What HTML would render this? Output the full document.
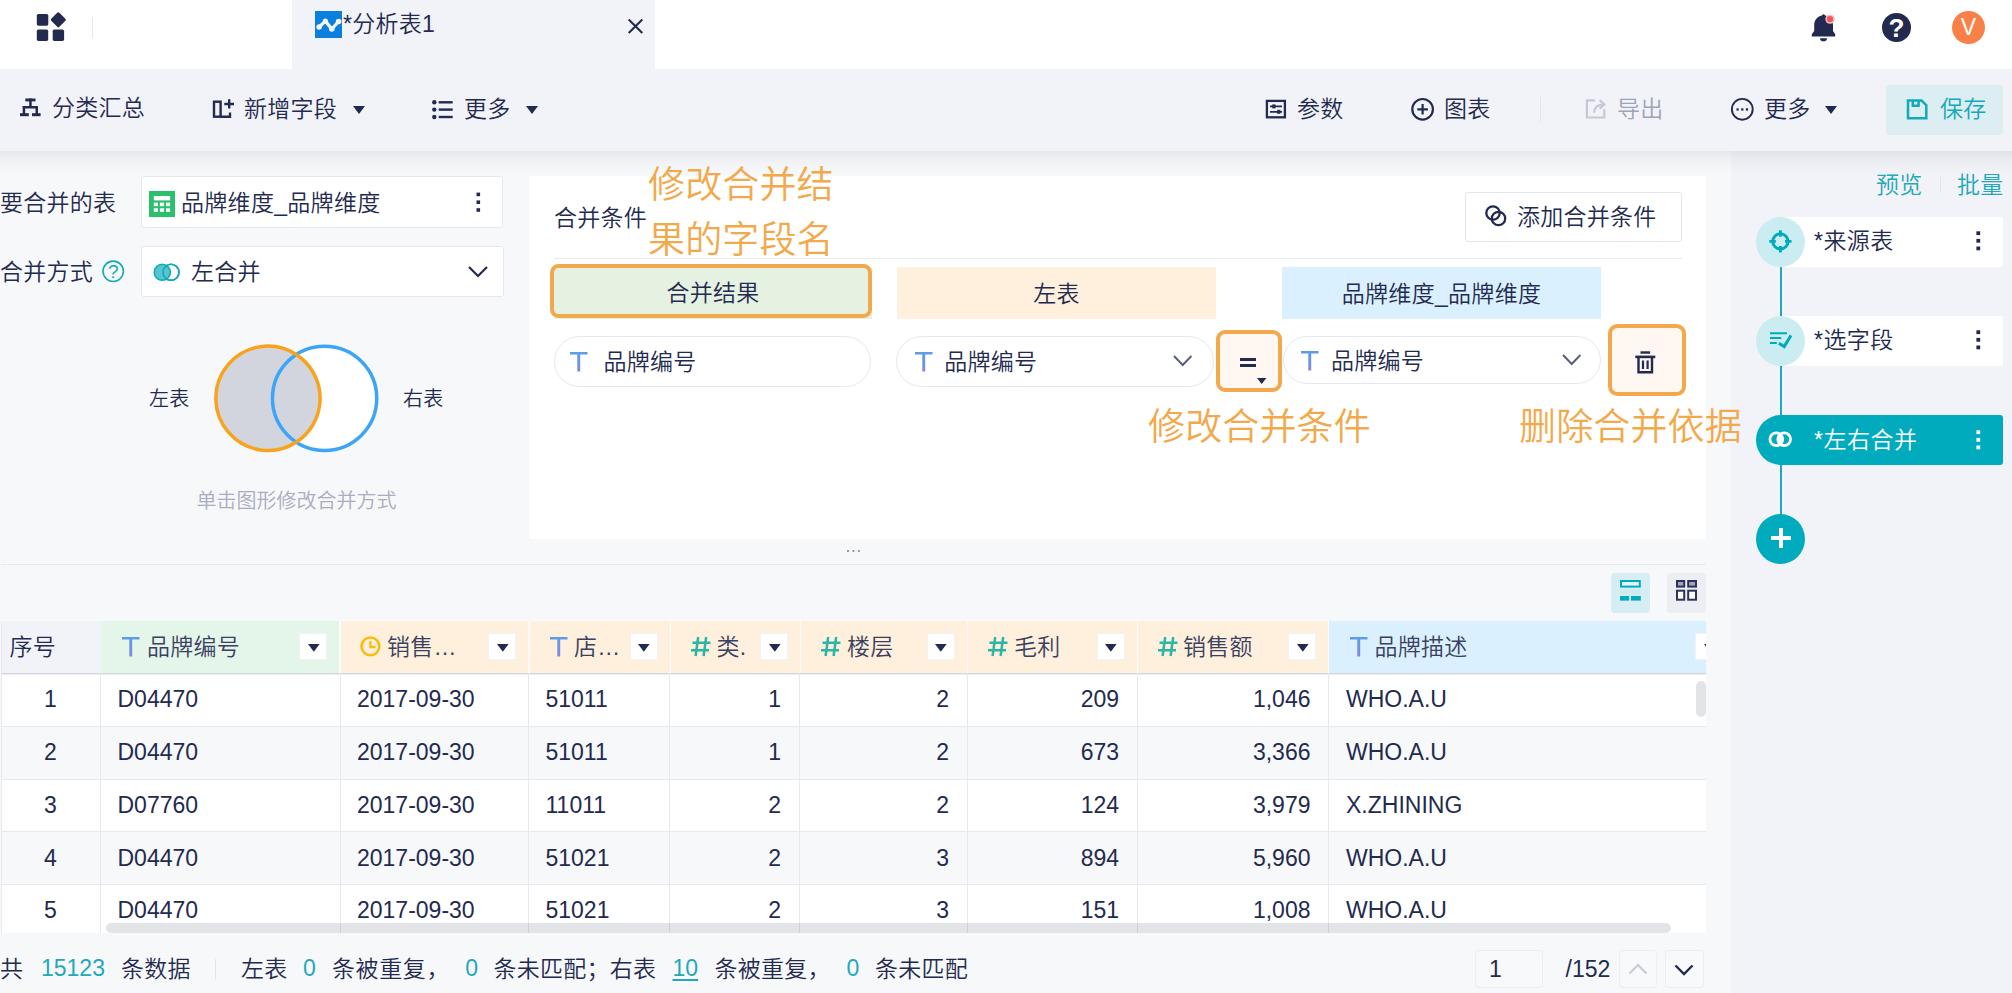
<!DOCTYPE html>
<html lang="zh-CN"><head><meta charset="utf-8"><title>分析表1</title>
<style>
html,body{margin:0;padding:0;}
body{width:2012px;height:993px;overflow:hidden;position:relative;background:#f7f8fa;font-family:"Liberation Sans","Noto Sans CJK SC",sans-serif;font-weight:350;color:#232a50;}
.t{position:absolute;white-space:nowrap;font-weight:350;}
.r{position:absolute;white-space:nowrap;font-weight:350;text-align:right;}
</style></head><body>

<div style="position:absolute;left:0px;top:0px;width:2012px;height:69px;background:#fff;"></div>
<div style="position:absolute;left:292px;top:0px;width:363px;height:69px;background:#f2f3f8;"></div>
<div style="position:absolute;left:1731px;top:151px;width:281px;height:842px;background:#f2f3f8;"></div>
<div style="position:absolute;left:0px;top:69px;width:2012px;height:82px;background:#f2f3f8;"></div>
<div style="position:absolute;left:0px;top:151px;width:2012px;height:24px;background:linear-gradient(to bottom,rgba(35,42,80,0.085),rgba(35,42,80,0.05) 22%,rgba(35,42,80,0.022) 50%,rgba(35,42,80,0.006) 80%,rgba(35,42,80,0));"></div>
<svg style="position:absolute;left:36px;top:12px;overflow:visible;" width="30" height="30" viewBox="0 0 30 30"><g fill="#232a50"><rect x="0.8" y="1.9" width="11.5" height="11.8" rx="1.6"/><rect x="0.8" y="17.6" width="11.4" height="11.3" rx="1.6"/><rect x="16.7" y="17.6" width="11.4" height="11.3" rx="1.6"/><rect x="16.55" y="2.05" width="11.5" height="11.5" rx="1.5" transform="rotate(45 22.3 7.8)"/></g></svg>
<div style="position:absolute;left:92px;top:17px;width:1px;height:21px;background:#e6e8ee;"></div>
<svg style="position:absolute;left:315px;top:11px;overflow:visible;" width="27" height="27" viewBox="0 0 27 27"><rect width="27" height="27" fill="#0a7fdd"/><polyline points="4.1,16 10.4,10.1 16.8,18 23.6,10.5" fill="none" stroke="#f3f7fc" stroke-width="3.3" stroke-linejoin="round" stroke-linecap="round"/><g fill="#f3f7fc"><circle cx="4.1" cy="16" r="2.8"/><circle cx="10.4" cy="10.1" r="2.6"/><circle cx="16.8" cy="18" r="2.8"/><circle cx="23.6" cy="10.5" r="2.8"/></g></svg>
<div class="t" style="left:343px;top:9px;font-size:23px;line-height:30px;color:#232a50;letter-spacing:0.25px;">*分析表1</div>
<svg style="position:absolute;left:628px;top:19px;overflow:visible;" width="15" height="15" viewBox="0 0 15 15"><path d="M0.7 0.6 L14.3 13.9 M14.3 0.6 L0.7 13.9" stroke="#232a50" stroke-width="2.1" fill="none"/></svg>
<svg style="position:absolute;left:1811px;top:13px;overflow:visible;" width="25" height="29" viewBox="0 0 25 29"><path d="M10.9 2.4 Q12.5 0 14.1 2.4 C19 3.4 22 7.2 22 12 V18 L24.2 21.3 V23.5 H0.8 V21.3 L3.2 18 V12 C3.2 7.2 6 3.4 10.9 2.4 Z" fill="#232a50"/><path d="M9 25.2 H16 A3.5 3.1 0 0 1 9 25.2Z" fill="#232a50"/><circle cx="19" cy="6.1" r="4.7" fill="#f6bcc0"/><circle cx="19" cy="6.1" r="3.2" fill="#ec5860"/></svg>
<div style="position:absolute;left:1881.5px;top:13px;width:29px;height:29px;background:#232a50;border-radius:50%;"></div>
<div class="t" style="left:1882px;top:13px;width:29px;text-align:center;font-size:26px;line-height:30px;color:#fff;font-weight:700;">?</div>
<div style="position:absolute;left:1952px;top:11px;width:33px;height:33px;background:#f98148;border-radius:50%;"></div>
<div class="t" style="left:1952px;top:11px;width:33px;text-align:center;font-size:23px;line-height:33px;color:#fff;font-weight:400;">V</div>
<svg style="position:absolute;left:20px;top:98px;overflow:visible;" width="21" height="19" viewBox="0 0 21 19"><g fill="#232a50"><rect x="5.3" y="0.5" width="10.2" height="2.9"/><rect x="9.2" y="0.5" width="2.5" height="9"/><rect x="2.7" y="8" width="15.3" height="2.5"/><rect x="2.7" y="8" width="2.5" height="8"/><rect x="15.5" y="8" width="2.5" height="8"/><rect x="0" y="15.2" width="8.8" height="3"/><rect x="12" y="15.2" width="8.6" height="3"/></g></svg>
<div class="t" style="left:52px;top:93px;font-size:23px;line-height:30px;color:#232a50;letter-spacing:0.25px;">分类汇总</div>
<svg style="position:absolute;left:212px;top:99px;overflow:visible;" width="23" height="20" viewBox="0 0 23 20"><g fill="none" stroke="#232a50" stroke-width="2.4"><rect x="2" y="2.7" width="6.6" height="15"/><path d="M8.6 17.7 H18 V13.6"/><path d="M12.3 5 H22 M17.2 0.3 V9.5"/></g></svg>
<div class="t" style="left:244px;top:94px;font-size:23px;line-height:30px;color:#232a50;letter-spacing:0.25px;">新增字段</div>
<svg style="position:absolute;left:353px;top:106px;overflow:visible;" width="12" height="8" viewBox="0 0 12 8"><path d="M0 0 H12 L6 8 Z" fill="#232a50"/></svg>
<svg style="position:absolute;left:432px;top:100px;overflow:visible;" width="21" height="19" viewBox="0 0 21 19"><g fill="#232a50"><circle cx="2.3" cy="2.3" r="2.2"/><circle cx="2.3" cy="9.6" r="2.2"/><circle cx="2.3" cy="17" r="2.2"/><rect x="6.7" y="1.1" width="14" height="2.4"/><rect x="6.7" y="8.4" width="14" height="2.4"/><rect x="6.7" y="15.8" width="14" height="2.4"/></g></svg>
<div class="t" style="left:464px;top:94px;font-size:23px;line-height:30px;color:#232a50;letter-spacing:0.25px;">更多</div>
<svg style="position:absolute;left:526px;top:106px;overflow:visible;" width="12" height="8" viewBox="0 0 12 8"><path d="M0 0 H12 L6 8 Z" fill="#232a50"/></svg>
<svg style="position:absolute;left:1265px;top:99px;overflow:visible;" width="22" height="20" viewBox="0 0 22 20"><g fill="none" stroke="#232a50" stroke-width="2.3"><rect x="1.9" y="1.9" width="18" height="16.4"/><path d="M5 7.4 H17 M5 12.8 H17" stroke-width="1.7"/></g><rect x="7.3" y="5.4" width="3.2" height="4" fill="#232a50"/><rect x="12.2" y="10.8" width="3.2" height="4" fill="#232a50"/></svg>
<div class="t" style="left:1297px;top:94px;font-size:23px;line-height:30px;color:#232a50;letter-spacing:0.25px;">参数</div>
<svg style="position:absolute;left:1411px;top:98px;overflow:visible;" width="23" height="23" viewBox="0 0 23 23"><g fill="none" stroke="#232a50" stroke-width="2.2"><circle cx="11.6" cy="11.3" r="10.3"/><path d="M6.3 11.3 H16.9 M11.6 6 V16.6"/></g></svg>
<div class="t" style="left:1444px;top:94px;font-size:23px;line-height:30px;color:#232a50;letter-spacing:0.25px;">图表</div>
<div style="position:absolute;left:1540px;top:97px;width:1px;height:26px;background:#e4e6ec;"></div>
<svg style="position:absolute;left:1585px;top:98px;overflow:visible;" width="22" height="22" viewBox="0 0 22 22"><g fill="none" stroke="#c6c9d5" stroke-width="2.2"><path d="M9.9 2.3 H1.9 V19.5 H19.3 V11.2"/><path d="M9.2 14.8 C9.2 9.2 12.2 6.4 19 6.3"/><path d="M14.6 2 L19.4 6.4 L14.6 10.8" stroke-linejoin="miter"/></g></svg>
<div class="t" style="left:1617px;top:94px;font-size:23px;line-height:30px;color:#9fa3b8;letter-spacing:0.25px;">导出</div>
<svg style="position:absolute;left:1730px;top:98px;overflow:visible;" width="24" height="23" viewBox="0 0 24 23"><circle cx="12.3" cy="11.3" r="10.4" fill="none" stroke="#232a50" stroke-width="1.9"/><g fill="#232a50"><rect x="6.5" y="10.3" width="2.2" height="2.3"/><rect x="11.2" y="10.3" width="2.2" height="2.3"/><rect x="15.9" y="10.3" width="2.2" height="2.3"/></g></svg>
<div class="t" style="left:1764px;top:94px;font-size:23px;line-height:30px;color:#232a50;letter-spacing:0.25px;">更多</div>
<svg style="position:absolute;left:1825px;top:106px;overflow:visible;" width="12" height="8" viewBox="0 0 12 8"><path d="M0 0 H12 L6 8 Z" fill="#232a50"/></svg>
<div style="position:absolute;left:1886px;top:85px;width:117px;height:50px;background:#ddeef3;border-radius:4px;"></div>
<svg style="position:absolute;left:1906px;top:99px;overflow:visible;" width="22" height="21" viewBox="0 0 22 21"><g fill="none" stroke="#12a9ba" stroke-width="2.5"><path d="M2 1.6 H15.5 L20.3 6.2 V19.3 H2 Z"/><path d="M6.8 1.6 V6.7 H12.6 V1.6"/></g></svg>
<div class="t" style="left:1940px;top:94px;font-size:23px;line-height:30px;color:#12a9ba;letter-spacing:0.25px;">保存</div>
<div class="t" style="left:0px;top:188px;font-size:23px;line-height:30px;color:#232a50;letter-spacing:0.25px;">要合并的表</div>
<div style="position:absolute;left:141px;top:176px;width:360px;height:50px;background:#fff;border:1px solid #e6e8ee;border-radius:3px;"></div>
<svg style="position:absolute;left:149px;top:191px;overflow:visible;" width="26" height="26" viewBox="0 0 26 26"><rect width="26" height="26" fill="#2bc16c"/><g fill="#fff"><rect x="4.8" y="5" width="16.3" height="4.4"/><rect x="4.8" y="11.6" width="4.1" height="3.6"/><rect x="10.9" y="11.6" width="4.2" height="3.6"/><rect x="17" y="11.6" width="4.1" height="3.6"/><rect x="4.8" y="17.3" width="4.1" height="3.6"/><rect x="10.9" y="17.3" width="4.2" height="3.6"/><rect x="17" y="17.3" width="4.1" height="3.6"/></g></svg>
<div class="t" style="left:181px;top:188px;font-size:23px;line-height:30px;color:#232a50;letter-spacing:0.3px;">品牌维度_品牌维度</div>
<svg style="position:absolute;left:476px;top:192px;overflow:visible;" width="5" height="21" viewBox="0 0 5 21"><g fill="#232a50"><rect x="0.5" y="0.6" width="3.6" height="3.6"/><rect x="0.5" y="8.4" width="3.6" height="3.6"/><rect x="0.5" y="16.2" width="3.6" height="3.6"/></g></svg>
<div class="t" style="left:0px;top:257px;font-size:23px;line-height:30px;color:#232a50;letter-spacing:0.25px;">合并方式</div>
<svg style="position:absolute;left:102px;top:260px;overflow:visible;" width="23" height="23" viewBox="0 0 23 23"><circle cx="11.2" cy="11.3" r="10.2" fill="none" stroke="#12a9ba" stroke-width="1.6"/></svg>
<div class="t" style="left:102px;top:261px;width:22.5px;text-align:center;font-size:19px;line-height:22px;color:#12a9ba;font-weight:400;">?</div>
<div style="position:absolute;left:141px;top:246px;width:361px;height:49px;background:#fff;border:1px solid #e6e8ee;border-radius:3px;"></div>
<svg style="position:absolute;left:153px;top:263px;overflow:visible;" width="28" height="19" viewBox="0 0 28 19"><circle cx="18" cy="9.3" r="8" fill="#fff" stroke="#12a9ba" stroke-width="1.6"/><circle cx="9.3" cy="9.3" r="8" fill="#56c5cf" stroke="#12a9ba" stroke-width="1.6"/><circle cx="18" cy="9.3" r="8" fill="none" stroke="#12a9ba" stroke-width="1.6"/></svg>
<div class="t" style="left:191px;top:257px;font-size:23px;line-height:30px;color:#232a50;letter-spacing:0.25px;">左合并</div>
<svg style="position:absolute;left:468px;top:266px;overflow:visible;" width="20" height="12" viewBox="0 0 20 12"><path d="M1 1 L10 10 L19 1" fill="none" stroke="#232a50" stroke-width="2.2"/></svg>
<div class="t" style="left:149px;top:386px;font-size:20px;line-height:26px;color:#232a50;letter-spacing:0.25px;">左表</div>
<div class="t" style="left:403px;top:386px;font-size:20px;line-height:26px;color:#232a50;letter-spacing:0.25px;">右表</div>
<svg style="position:absolute;left:212px;top:342px;overflow:visible;" width="170" height="113" viewBox="0 0 170 113"><circle cx="112.6" cy="56.3" r="52.15" fill="#fff"/><circle cx="55.7" cy="56.3" r="52.15" fill="#d3d5de"/><circle cx="112.6" cy="56.3" r="52.15" fill="none" stroke="#3da5f8" stroke-width="3.5"/><path d="M 84.15 12.42 A 52.15 52.15 0 1 0 84.15 100.18" fill="none" stroke="#f9a21c" stroke-width="3.5"/><path d="M 84.15 12.42 A 52.15 52.15 0 0 1 84.15 100.18" fill="none" stroke="#f9a21c" stroke-width="3.5"/></svg>
<div class="t" style="left:196.5px;top:488px;font-size:20px;line-height:26px;color:#a9adbf;letter-spacing:0;">单击图形修改合并方式</div>
<div style="position:absolute;left:529px;top:176px;width:1177px;height:363px;background:#fff;"></div>
<div class="t" style="left:554px;top:203px;font-size:23px;line-height:30px;color:#232a50;letter-spacing:0.25px;">合并条件</div>
<div style="position:absolute;left:1465px;top:192px;width:215px;height:48px;background:#fff;border:1px solid #e3e6ed;border-radius:3px;"></div>
<svg style="position:absolute;left:1485px;top:205px;overflow:visible;" width="22" height="22" viewBox="0 0 22 22"><g fill="none" stroke="#232a50" stroke-width="2.3"><circle cx="8" cy="8" r="6.7"/><circle cx="13.5" cy="13.5" r="6.7"/></g></svg>
<div class="t" style="left:1517px;top:202px;font-size:23px;line-height:30px;color:#232a50;letter-spacing:0.25px;">添加合并条件</div>
<div style="position:absolute;left:554px;top:258px;width:1128px;height:1px;background:#e9ebf0;"></div>
<div style="position:absolute;left:554px;top:267px;width:318px;height:51.5px;background:#e6f2e1;"></div>
<div style="position:absolute;left:897px;top:267px;width:319px;height:51.5px;background:#fef0dc;"></div>
<div style="position:absolute;left:1282px;top:267px;width:319px;height:51.5px;background:#dbf0fe;"></div>
<div class="t" style="left:554px;top:278px;width:318px;text-align:center;font-size:23px;line-height:30px;letter-spacing:0.25px;">合并结果</div>
<div class="t" style="left:897px;top:279px;width:319px;text-align:center;font-size:23px;line-height:30px;letter-spacing:0.25px;">左表</div>
<div class="t" style="left:1282px;top:279px;width:319px;text-align:center;font-size:23px;line-height:30px;letter-spacing:0.3px;">品牌维度_品牌维度</div>
<div style="position:absolute;left:550px;top:264px;width:314px;height:46px;border:4px solid #f2a94b;border-radius:8.5px;"></div>
<svg width="0" height="0" style="position:absolute"><defs><linearGradient id="tg" x1="0" y1="0" x2="0" y2="1"><stop offset="0" stop-color="#5b9deb"/><stop offset="1" stop-color="#8189dc"/></linearGradient></defs></svg>
<div style="position:absolute;left:554px;top:336px;width:315px;height:49px;background:#fff;border:1px solid #e6e8ee;border-radius:26px;"></div>
<svg style="position:absolute;left:570px;top:352px;overflow:visible;" width="18" height="20" viewBox="0 0 18 20"><path d="M0 0 H17.5 V2.6 H10.2 V19.5 H7.3 V2.6 H0 Z" fill="url(#tg)"/></svg>
<div class="t" style="left:603.5px;top:347px;font-size:23px;line-height:30px;color:#232a50;letter-spacing:0.25px;">品牌编号</div>
<div style="position:absolute;left:896px;top:336px;width:316px;height:49px;background:#fff;border:1px solid #e6e8ee;border-radius:26px;"></div>
<svg style="position:absolute;left:915px;top:352px;overflow:visible;" width="18" height="20" viewBox="0 0 18 20"><path d="M0 0 H17.5 V2.6 H10.2 V19.5 H7.3 V2.6 H0 Z" fill="url(#tg)"/></svg>
<div class="t" style="left:944.3px;top:347px;font-size:23px;line-height:30px;color:#232a50;letter-spacing:0.25px;">品牌编号</div>
<svg style="position:absolute;left:1173px;top:355px;overflow:visible;" width="20" height="12" viewBox="0 0 20 12"><path d="M1 1 L9.7 10 L18.4 1" fill="none" stroke="#59607f" stroke-width="2"/></svg>
<div style="position:absolute;left:1283px;top:336px;width:316px;height:46px;background:#fff;border:1px solid #e6e8ee;border-radius:24px;"></div>
<svg style="position:absolute;left:1301px;top:351px;overflow:visible;" width="18" height="20" viewBox="0 0 18 20"><path d="M0 0 H17.5 V2.6 H10.2 V19.5 H7.3 V2.6 H0 Z" fill="url(#tg)"/></svg>
<div class="t" style="left:1331px;top:346px;font-size:23px;line-height:30px;color:#232a50;letter-spacing:0.25px;">品牌编号</div>
<svg style="position:absolute;left:1562px;top:354px;overflow:visible;" width="20" height="12" viewBox="0 0 20 12"><path d="M1 1 L9.7 10 L18.4 1" fill="none" stroke="#59607f" stroke-width="2"/></svg>
<div style="position:absolute;left:1216px;top:330px;width:58px;height:54px;border:4px solid #f2a94b;border-radius:9px;background:#fff7f1;"></div>
<div style="position:absolute;left:1240px;top:358px;width:16px;height:3px;background:#232a50;"></div>
<div style="position:absolute;left:1240px;top:364px;width:16px;height:3px;background:#232a50;"></div>
<svg style="position:absolute;left:1256.5px;top:378px;overflow:visible;" width="10" height="6" viewBox="0 0 10 6"><path d="M0 0 H9.4 L4.7 6 Z" fill="#232a50"/></svg>
<div style="position:absolute;left:1608px;top:324px;width:70px;height:63.5px;border:4px solid #f2a94b;border-radius:9.5px;background:#fff7f1;"></div>
<svg style="position:absolute;left:1635px;top:351px;overflow:visible;" width="21" height="23" viewBox="0 0 21 23"><g fill="#232a50"><rect x="5.5" y="0.3" width="9.6" height="2.4"/><rect x="0.3" y="4.6" width="20" height="2.6"/></g><g fill="none" stroke="#232a50" stroke-width="2.4"><path d="M3.5 7 V21.3 H17 V7"/><path d="M8 9.5 V18 M12.6 9.5 V18" stroke-width="2.2"/></g></svg>
<div class="t" style="left:648px;top:162px;font-size:37px;line-height:48px;color:#f2a94b;font-weight:350;letter-spacing:0.15px;">修改合并结</div>
<div class="t" style="left:648px;top:217px;font-size:37px;line-height:48px;color:#f2a94b;font-weight:350;letter-spacing:0.15px;">果的字段名</div>
<div class="t" style="left:1148px;top:404px;font-size:37px;line-height:48px;color:#f2a94b;font-weight:350;letter-spacing:0.15px;">修改合并条件</div>
<div class="t" style="left:1519px;top:404px;font-size:37px;line-height:48px;color:#f2a94b;font-weight:350;letter-spacing:0.15px;">删除合并依据</div>
<svg style="position:absolute;left:847px;top:550px;overflow:visible;" width="14" height="3" viewBox="0 0 14 3"><g fill="#9699ad"><rect x="0" y="0" width="2" height="2"/><rect x="5.4" y="0" width="2" height="2"/><rect x="10.9" y="0" width="2" height="2"/></g></svg>
<div style="position:absolute;left:1px;top:564px;width:1705px;height:1px;background:#e7e9f0;"></div>
<div class="t" style="left:1876px;top:170px;font-size:23px;line-height:30px;color:#1fa9b9;letter-spacing:0.25px;">预览</div>
<div style="position:absolute;left:1940px;top:177px;width:1px;height:15px;background:#e2e4ea;"></div>
<div class="t" style="left:1957px;top:170px;font-size:23px;line-height:30px;color:#1fa9b9;letter-spacing:0.25px;">批量</div>
<div style="position:absolute;left:1779.8px;top:242px;width:1.9px;height:297px;background:#1aabba;"></div>
<div style="position:absolute;left:1780px;top:217px;width:223px;height:50px;background:#fff;border-radius:0 3px 3px 0;"></div>
<div style="position:absolute;left:1756px;top:217px;width:49px;height:50px;background:#cbecf1;border-radius:50%;"></div>
<svg style="position:absolute;left:1769px;top:229.5px;overflow:visible;" width="23" height="23" viewBox="0 0 23 23"><g fill="none" stroke="#00abbd" stroke-width="3"><circle cx="11.4" cy="11.4" r="7.6"/><path d="M11.4 0.3 V6.8 M11.4 16 V22.5 M0.3 11.4 H6.8 M16 11.4 H22.5" stroke-width="2.8"/></g></svg>
<div class="t" style="left:1814px;top:226px;font-size:23px;line-height:30px;color:#232a50;letter-spacing:0.45px;">*来源表</div>
<svg style="position:absolute;left:1976px;top:231px;overflow:visible;" width="5" height="20" viewBox="0 0 5 20"><g fill="#232a50"><rect x="0.4" y="0.3" width="3.8" height="3.8"/><rect x="0.4" y="7.9" width="3.8" height="3.8"/><rect x="0.4" y="15.5" width="3.8" height="3.8"/></g></svg>
<div style="position:absolute;left:1780px;top:316px;width:223px;height:50px;background:#fff;border-radius:0 3px 3px 0;"></div>
<div style="position:absolute;left:1756px;top:316px;width:49px;height:50px;background:#cbecf1;border-radius:50%;"></div>
<svg style="position:absolute;left:1769px;top:331px;overflow:visible;" width="23" height="19" viewBox="0 0 23 19"><g fill="none" stroke="#00abbd" stroke-width="2"><path d="M1 2.2 H18 M1 7.1 H12.3 M1 12 H7.8"/><path d="M9.9 12.3 L15.2 15.6 L22 4.4" stroke-width="3"/></g></svg>
<div class="t" style="left:1814px;top:325px;font-size:23px;line-height:30px;color:#232a50;letter-spacing:0.45px;">*选字段</div>
<svg style="position:absolute;left:1976px;top:330px;overflow:visible;" width="5" height="20" viewBox="0 0 5 20"><g fill="#232a50"><rect x="0.4" y="0.3" width="3.8" height="3.8"/><rect x="0.4" y="7.9" width="3.8" height="3.8"/><rect x="0.4" y="15.5" width="3.8" height="3.8"/></g></svg>
<div style="position:absolute;left:1756px;top:415px;width:247px;height:50px;background:#00abbd;border-radius:25px 3px 3px 25px;"></div>
<svg style="position:absolute;left:1768px;top:431px;overflow:visible;" width="25" height="17" viewBox="0 0 25 17"><path d="M12.25 3.3 A6.4 6.4 0 0 1 12.25 13.3 A6.4 6.4 0 0 1 12.25 3.3Z" fill="#fff"/><g fill="none" stroke="#fff" stroke-width="2.8"><circle cx="8.3" cy="8.3" r="6.4"/><circle cx="16.2" cy="8.3" r="6.4"/></g></svg>
<div class="t" style="left:1814px;top:425px;font-size:23px;line-height:30px;color:#fff;letter-spacing:0.5px;">*左右合并</div>
<svg style="position:absolute;left:1976px;top:429.5px;overflow:visible;" width="5" height="20" viewBox="0 0 5 20"><g fill="#fff"><rect x="0.4" y="0.3" width="3.8" height="3.8"/><rect x="0.4" y="7.9" width="3.8" height="3.8"/><rect x="0.4" y="15.5" width="3.8" height="3.8"/></g></svg>
<div style="position:absolute;left:1756px;top:514px;width:49px;height:50px;background:#00abbd;border-radius:50%;"></div>
<div style="position:absolute;left:1770.5px;top:536px;width:20px;height:4px;background:#fff;"></div>
<div style="position:absolute;left:1778.5px;top:528px;width:4px;height:20px;background:#fff;"></div>
<div style="position:absolute;left:1611px;top:573px;width:39px;height:40px;background:#d6eef3;border-radius:4px;"></div>
<svg style="position:absolute;left:1620px;top:580px;overflow:visible;" width="21" height="21" viewBox="0 0 21 21"><rect x="1" y="1" width="18.8" height="5.6" fill="#e6f5f7" stroke="#00abbd" stroke-width="2"/><rect x="0" y="9.5" width="9.2" height="4.5" fill="#c9ecf0"/><rect x="11" y="9.5" width="9.8" height="4.5" fill="#c9ecf0"/><rect x="0" y="16" width="9.2" height="4.6" fill="#00abbd"/><rect x="11" y="16" width="9.8" height="4.6" fill="#00abbd"/></svg>
<div style="position:absolute;left:1667px;top:573px;width:39px;height:40px;background:#edeef3;border-radius:4px;"></div>
<svg style="position:absolute;left:1676px;top:580px;overflow:visible;" width="21" height="21" viewBox="0 0 21 21"><g stroke="#2c3258" stroke-width="2"><rect x="1" y="1" width="7.2" height="5.6" fill="#a3a6ba"/><rect x="12.2" y="1" width="7.8" height="5.6" fill="#a3a6ba"/><rect x="1" y="10.7" width="7.2" height="9" fill="#fff"/><rect x="12.2" y="10.7" width="7.8" height="9" fill="#fff"/></g></svg>
<div style="position:absolute;left:0;top:621px;width:1706px;height:312px;overflow:hidden;background:#fff;">
<div style="position:absolute;left:0px;top:52.5px;width:1706px;height:52.8px;background:#fff;"></div>
<div style="position:absolute;left:0px;top:105.3px;width:1706px;height:52.8px;background:#f7f8fa;"></div>
<div style="position:absolute;left:0px;top:158.1px;width:1706px;height:52.8px;background:#fff;"></div>
<div style="position:absolute;left:0px;top:210.9px;width:1706px;height:52.8px;background:#f7f8fa;"></div>
<div style="position:absolute;left:0px;top:263.7px;width:1706px;height:52.8px;background:#fff;"></div>
<div style="position:absolute;left:0px;top:105px;width:1706px;height:1px;background:#e7e9ef;"></div>
<div style="position:absolute;left:0px;top:158px;width:1706px;height:1px;background:#e7e9ef;"></div>
<div style="position:absolute;left:0px;top:210px;width:1706px;height:1px;background:#e7e9ef;"></div>
<div style="position:absolute;left:0px;top:263px;width:1706px;height:1px;background:#e7e9ef;"></div>
<div style="position:absolute;left:0px;top:316px;width:1706px;height:1px;background:#e7e9ef;"></div>
<div style="position:absolute;left:0px;top:0px;width:1706px;height:52px;background:#fbfbfd;"></div>
<div style="position:absolute;left:1px;top:0px;width:99.5px;height:52px;background:#f2f3f8;"></div>
<div style="position:absolute;left:100.5px;top:0px;width:238.5px;height:52px;background:#e4f5ea;"></div>
<div style="position:absolute;left:340.5px;top:0px;width:187.5px;height:52px;background:#fef0dc;"></div>
<div style="position:absolute;left:529.5px;top:0px;width:140.0px;height:52px;background:#fef0dc;"></div>
<div style="position:absolute;left:670.5px;top:0px;width:129.0px;height:52px;background:#fef0dc;"></div>
<div style="position:absolute;left:800.5px;top:0px;width:166.5px;height:52px;background:#fef0dc;"></div>
<div style="position:absolute;left:968px;top:0px;width:169px;height:52px;background:#fef0dc;"></div>
<div style="position:absolute;left:1138px;top:0px;width:190px;height:52px;background:#fef0dc;"></div>
<div style="position:absolute;left:1329px;top:0px;width:377px;height:52px;background:#dbf0fe;"></div>
<div style="position:absolute;left:0px;top:52px;width:1706px;height:1px;background:#d3d6e0;"></div>
<div style="position:absolute;left:0px;top:53px;width:1706px;height:1px;background:#eceef2;"></div>
<div style="position:absolute;left:1px;top:0px;width:1px;height:312px;background:#e7e9ef;"></div>
<div style="position:absolute;left:100px;top:52px;width:1px;height:312px;background:#e7e9ef;"></div>
<div style="position:absolute;left:340px;top:52px;width:1px;height:312px;background:#e7e9ef;"></div>
<div style="position:absolute;left:528px;top:52px;width:1px;height:312px;background:#e7e9ef;"></div>
<div style="position:absolute;left:669px;top:52px;width:1px;height:312px;background:#e7e9ef;"></div>
<div style="position:absolute;left:799px;top:52px;width:1px;height:312px;background:#e7e9ef;"></div>
<div style="position:absolute;left:967px;top:52px;width:1px;height:312px;background:#e7e9ef;"></div>
<div style="position:absolute;left:1137px;top:52px;width:1px;height:312px;background:#e7e9ef;"></div>
<div style="position:absolute;left:1328px;top:52px;width:1px;height:312px;background:#e7e9ef;"></div>
</div>
<div class="t" style="left:9.5px;top:632px;font-size:23px;line-height:30px;color:#232a50;letter-spacing:0.25px;">序号</div>
<svg style="position:absolute;left:121.5px;top:636.5px;overflow:visible;" width="18" height="20" viewBox="0 0 18 20"><path d="M0 0 H17.5 V2.6 H10.2 V19.5 H7.3 V2.6 H0 Z" fill="url(#tg)"/></svg>
<div class="t" style="left:147px;top:632px;font-size:23px;line-height:30px;color:#3a4060;letter-spacing:0.25px;">品牌编号</div>
<div style="position:absolute;left:299px;top:633px;width:28px;height:27px;background:#fff;box-shadow:inset 0 0 0 1px #f1f2f6;"></div>
<svg style="position:absolute;left:307.7px;top:644px;overflow:visible;" width="12" height="8" viewBox="0 0 12 8"><path d="M0 0 H11.6 L5.8 7.7 Z" fill="#232a50"/></svg>
<svg style="position:absolute;left:360px;top:636px;overflow:visible;" width="21" height="21" viewBox="0 0 21 21"><g fill="none" stroke="#f9bd10" stroke-width="2.6"><circle cx="10.4" cy="10.4" r="8.9"/><path d="M10.4 5 V11 H15.5" stroke-width="2.3"/></g></svg>
<div class="t" style="left:387px;top:632px;font-size:23px;line-height:30px;color:#3a4060;letter-spacing:0.25px;">销售…</div>
<div style="position:absolute;left:488px;top:633px;width:28px;height:27px;background:#fff;box-shadow:inset 0 0 0 1px #f1f2f6;"></div>
<svg style="position:absolute;left:496.7px;top:644px;overflow:visible;" width="12" height="8" viewBox="0 0 12 8"><path d="M0 0 H11.6 L5.8 7.7 Z" fill="#232a50"/></svg>
<svg style="position:absolute;left:549.5px;top:636.5px;overflow:visible;" width="18" height="20" viewBox="0 0 18 20"><path d="M0 0 H17.5 V2.6 H10.2 V19.5 H7.3 V2.6 H0 Z" fill="url(#tg)"/></svg>
<div class="t" style="left:574px;top:632px;font-size:23px;line-height:30px;color:#3a4060;letter-spacing:0.25px;">店…</div>
<div style="position:absolute;left:629.5px;top:633px;width:28px;height:27px;background:#fff;box-shadow:inset 0 0 0 1px #f1f2f6;"></div>
<svg style="position:absolute;left:638.2px;top:644px;overflow:visible;" width="12" height="8" viewBox="0 0 12 8"><path d="M0 0 H11.6 L5.8 7.7 Z" fill="#232a50"/></svg>
<svg style="position:absolute;left:690.5px;top:636.5px;overflow:visible;" width="20" height="20" viewBox="0 0 20 20"><g fill="none" stroke="#2bb5a4" stroke-width="2.5"><path d="M7.2 0 L4.6 19 M15.2 0 L12.6 19 M1.5 5.8 H19.5 M0 13.2 H18"/></g></svg>
<div class="t" style="left:716.5px;top:632px;font-size:23px;line-height:30px;color:#3a4060;letter-spacing:0.25px;">类.</div>
<div style="position:absolute;left:760px;top:633px;width:28px;height:27px;background:#fff;box-shadow:inset 0 0 0 1px #f1f2f6;"></div>
<svg style="position:absolute;left:768.7px;top:644px;overflow:visible;" width="12" height="8" viewBox="0 0 12 8"><path d="M0 0 H11.6 L5.8 7.7 Z" fill="#232a50"/></svg>
<svg style="position:absolute;left:820.5px;top:636.5px;overflow:visible;" width="20" height="20" viewBox="0 0 20 20"><g fill="none" stroke="#2bb5a4" stroke-width="2.5"><path d="M7.2 0 L4.6 19 M15.2 0 L12.6 19 M1.5 5.8 H19.5 M0 13.2 H18"/></g></svg>
<div class="t" style="left:847px;top:632px;font-size:23px;line-height:30px;color:#3a4060;letter-spacing:0.25px;">楼层</div>
<div style="position:absolute;left:926.5px;top:633px;width:28px;height:27px;background:#fff;box-shadow:inset 0 0 0 1px #f1f2f6;"></div>
<svg style="position:absolute;left:935.2px;top:644px;overflow:visible;" width="12" height="8" viewBox="0 0 12 8"><path d="M0 0 H11.6 L5.8 7.7 Z" fill="#232a50"/></svg>
<svg style="position:absolute;left:987.5px;top:636.5px;overflow:visible;" width="20" height="20" viewBox="0 0 20 20"><g fill="none" stroke="#2bb5a4" stroke-width="2.5"><path d="M7.2 0 L4.6 19 M15.2 0 L12.6 19 M1.5 5.8 H19.5 M0 13.2 H18"/></g></svg>
<div class="t" style="left:1014px;top:632px;font-size:23px;line-height:30px;color:#3a4060;letter-spacing:0.25px;">毛利</div>
<div style="position:absolute;left:1096.5px;top:633px;width:28px;height:27px;background:#fff;box-shadow:inset 0 0 0 1px #f1f2f6;"></div>
<svg style="position:absolute;left:1105.2px;top:644px;overflow:visible;" width="12" height="8" viewBox="0 0 12 8"><path d="M0 0 H11.6 L5.8 7.7 Z" fill="#232a50"/></svg>
<svg style="position:absolute;left:1157.5px;top:636.5px;overflow:visible;" width="20" height="20" viewBox="0 0 20 20"><g fill="none" stroke="#2bb5a4" stroke-width="2.5"><path d="M7.2 0 L4.6 19 M15.2 0 L12.6 19 M1.5 5.8 H19.5 M0 13.2 H18"/></g></svg>
<div class="t" style="left:1183px;top:632px;font-size:23px;line-height:30px;color:#3a4060;letter-spacing:0.25px;">销售额</div>
<div style="position:absolute;left:1288px;top:633px;width:28px;height:27px;background:#fff;box-shadow:inset 0 0 0 1px #f1f2f6;"></div>
<svg style="position:absolute;left:1296.7px;top:644px;overflow:visible;" width="12" height="8" viewBox="0 0 12 8"><path d="M0 0 H11.6 L5.8 7.7 Z" fill="#232a50"/></svg>
<svg style="position:absolute;left:1349.5px;top:636.5px;overflow:visible;" width="18" height="20" viewBox="0 0 18 20"><path d="M0 0 H17.5 V2.6 H10.2 V19.5 H7.3 V2.6 H0 Z" fill="url(#tg)"/></svg>
<div class="t" style="left:1374.5px;top:632px;font-size:23px;line-height:30px;color:#3a4060;letter-spacing:0.25px;">品牌描述</div>
<div style="position:absolute;left:1695px;top:633px;width:11px;height:28px;overflow:hidden;">
<div style="position:absolute;left:0px;top:0px;width:28px;height:27px;background:#fff;box-shadow:inset 0 0 0 1px #f1f2f6;"></div>
<svg style="position:absolute;left:8.5px;top:11px;overflow:visible;" width="12" height="8" viewBox="0 0 12 8"><path d="M0 0 H11.6 L5.8 7.7 Z" fill="#232a50"/></svg>
</div>
<div style="position:absolute;left:0;top:621px;width:1706px;height:312px;overflow:hidden;">
<div class="t" style="left:1px;width:99px;text-align:center;font-size:23px;line-height:30px;top:63px;">1</div>
<div class="t" style="left:117.5px;font-size:23px;line-height:30px;top:63px;">D04470</div>
<div class="t" style="left:357px;font-size:23px;line-height:30px;top:63px;">2017-09-30</div>
<div class="t" style="left:545.5px;font-size:23px;line-height:30px;top:63px;">51011</div>
<div class="r" style="left:631px;width:150px;font-size:23px;line-height:30px;top:63px;">1</div>
<div class="r" style="left:799px;width:150px;font-size:23px;line-height:30px;top:63px;">2</div>
<div class="r" style="left:969px;width:150px;font-size:23px;line-height:30px;top:63px;">209</div>
<div class="r" style="left:1160.5px;width:150px;font-size:23px;line-height:30px;top:63px;">1,046</div>
<div class="t" style="left:1346px;font-size:23px;line-height:30px;top:63px;">WHO.A.U</div>
<div class="t" style="left:1px;width:99px;text-align:center;font-size:23px;line-height:30px;top:116px;">2</div>
<div class="t" style="left:117.5px;font-size:23px;line-height:30px;top:116px;">D04470</div>
<div class="t" style="left:357px;font-size:23px;line-height:30px;top:116px;">2017-09-30</div>
<div class="t" style="left:545.5px;font-size:23px;line-height:30px;top:116px;">51011</div>
<div class="r" style="left:631px;width:150px;font-size:23px;line-height:30px;top:116px;">1</div>
<div class="r" style="left:799px;width:150px;font-size:23px;line-height:30px;top:116px;">2</div>
<div class="r" style="left:969px;width:150px;font-size:23px;line-height:30px;top:116px;">673</div>
<div class="r" style="left:1160.5px;width:150px;font-size:23px;line-height:30px;top:116px;">3,366</div>
<div class="t" style="left:1346px;font-size:23px;line-height:30px;top:116px;">WHO.A.U</div>
<div class="t" style="left:1px;width:99px;text-align:center;font-size:23px;line-height:30px;top:169px;">3</div>
<div class="t" style="left:117.5px;font-size:23px;line-height:30px;top:169px;">D07760</div>
<div class="t" style="left:357px;font-size:23px;line-height:30px;top:169px;">2017-09-30</div>
<div class="t" style="left:545.5px;font-size:23px;line-height:30px;top:169px;">11011</div>
<div class="r" style="left:631px;width:150px;font-size:23px;line-height:30px;top:169px;">2</div>
<div class="r" style="left:799px;width:150px;font-size:23px;line-height:30px;top:169px;">2</div>
<div class="r" style="left:969px;width:150px;font-size:23px;line-height:30px;top:169px;">124</div>
<div class="r" style="left:1160.5px;width:150px;font-size:23px;line-height:30px;top:169px;">3,979</div>
<div class="t" style="left:1346px;font-size:23px;line-height:30px;top:169px;">X.ZHINING</div>
<div class="t" style="left:1px;width:99px;text-align:center;font-size:23px;line-height:30px;top:222px;">4</div>
<div class="t" style="left:117.5px;font-size:23px;line-height:30px;top:222px;">D04470</div>
<div class="t" style="left:357px;font-size:23px;line-height:30px;top:222px;">2017-09-30</div>
<div class="t" style="left:545.5px;font-size:23px;line-height:30px;top:222px;">51021</div>
<div class="r" style="left:631px;width:150px;font-size:23px;line-height:30px;top:222px;">2</div>
<div class="r" style="left:799px;width:150px;font-size:23px;line-height:30px;top:222px;">3</div>
<div class="r" style="left:969px;width:150px;font-size:23px;line-height:30px;top:222px;">894</div>
<div class="r" style="left:1160.5px;width:150px;font-size:23px;line-height:30px;top:222px;">5,960</div>
<div class="t" style="left:1346px;font-size:23px;line-height:30px;top:222px;">WHO.A.U</div>
<div class="t" style="left:1px;width:99px;text-align:center;font-size:23px;line-height:30px;top:274px;">5</div>
<div class="t" style="left:117.5px;font-size:23px;line-height:30px;top:274px;">D04470</div>
<div class="t" style="left:357px;font-size:23px;line-height:30px;top:274px;">2017-09-30</div>
<div class="t" style="left:545.5px;font-size:23px;line-height:30px;top:274px;">51021</div>
<div class="r" style="left:631px;width:150px;font-size:23px;line-height:30px;top:274px;">2</div>
<div class="r" style="left:799px;width:150px;font-size:23px;line-height:30px;top:274px;">3</div>
<div class="r" style="left:969px;width:150px;font-size:23px;line-height:30px;top:274px;">151</div>
<div class="r" style="left:1160.5px;width:150px;font-size:23px;line-height:30px;top:274px;">1,008</div>
<div class="t" style="left:1346px;font-size:23px;line-height:30px;top:274px;">WHO.A.U</div>
</div>
<div style="position:absolute;left:1695.5px;top:681px;width:10.5px;height:35.5px;background:rgba(35,42,60,0.125);border-radius:5px;"></div>
<div style="position:absolute;left:106px;top:923px;width:1565px;height:10px;background:rgba(35,42,60,0.125);border-radius:5px;"></div>
<div style="position:absolute;left:0px;top:621px;width:1px;height:312px;background:#f7f8fa;"></div>
<div class="t" style="left:0px;top:954px;font-size:23px;line-height:30px;color:#232a50;letter-spacing:0.25px;">共</div>
<div class="t" style="left:41px;top:953px;font-size:23px;line-height:30px;color:#1fa9b9;">15123</div>
<div class="t" style="left:121px;top:954px;font-size:23px;line-height:30px;color:#232a50;letter-spacing:0.25px;">条数据</div>
<div style="position:absolute;left:215px;top:959px;width:1px;height:21px;background:#e4e6ec;"></div>
<div class="t" style="left:241px;top:954px;font-size:23px;line-height:30px;color:#232a50;letter-spacing:0.25px;">左表</div>
<div class="t" style="left:303px;top:953px;font-size:23px;line-height:30px;color:#1fa9b9;">0</div>
<div class="t" style="left:332px;top:954px;font-size:23px;line-height:30px;color:#232a50;letter-spacing:0.6px;">条被重复，</div>
<div class="t" style="left:465.2px;top:953px;font-size:23px;line-height:30px;color:#1fa9b9;">0</div>
<div class="t" style="left:493.5px;top:954px;font-size:23px;line-height:30px;color:#232a50;letter-spacing:0.25px;">条未匹配；右表</div>
<div class="t" style="left:672.5px;top:953px;font-size:23px;line-height:30px;color:#1fa9b9;text-decoration:underline;text-underline-offset:3px;text-decoration-thickness:1.5px;">10</div>
<div class="t" style="left:714.5px;top:954px;font-size:23px;line-height:30px;color:#232a50;letter-spacing:0.25px;">条被重复，</div>
<div class="t" style="left:846.5px;top:953px;font-size:23px;line-height:30px;color:#1fa9b9;">0</div>
<div class="t" style="left:875px;top:954px;font-size:23px;line-height:30px;color:#232a50;letter-spacing:0.25px;">条未匹配</div>
<div style="position:absolute;left:1475px;top:950px;width:65.5px;height:35.5px;background:#f8f9fb;border:1px solid #eceef3;border-radius:4px;"></div>
<div class="t" style="left:1489px;top:954px;font-size:23px;line-height:30px;color:#232a50;">1</div>
<div class="t" style="left:1565.5px;top:954px;font-size:23px;line-height:30px;color:#232a50;">/152</div>
<div style="position:absolute;left:1619px;top:950px;width:35.5px;height:35.5px;background:#f8f9fb;border:1px solid #eceef3;border-radius:4px;"></div>
<svg style="position:absolute;left:1628px;top:963px;overflow:visible;" width="20" height="12" viewBox="0 0 20 12"><path d="M1.5 10.5 L10 2 L18.5 10.5" fill="none" stroke="#c9ccd6" stroke-width="2.2"/></svg>
<div style="position:absolute;left:1665px;top:950px;width:36.5px;height:35.5px;background:#f8f9fb;border:1px solid #eceef3;border-radius:4px;"></div>
<svg style="position:absolute;left:1674.3px;top:963.5px;overflow:visible;" width="20" height="12" viewBox="0 0 20 12"><path d="M1.5 1.5 L10 10 L18.5 1.5" fill="none" stroke="#232a50" stroke-width="2.4"/></svg>
</body></html>
